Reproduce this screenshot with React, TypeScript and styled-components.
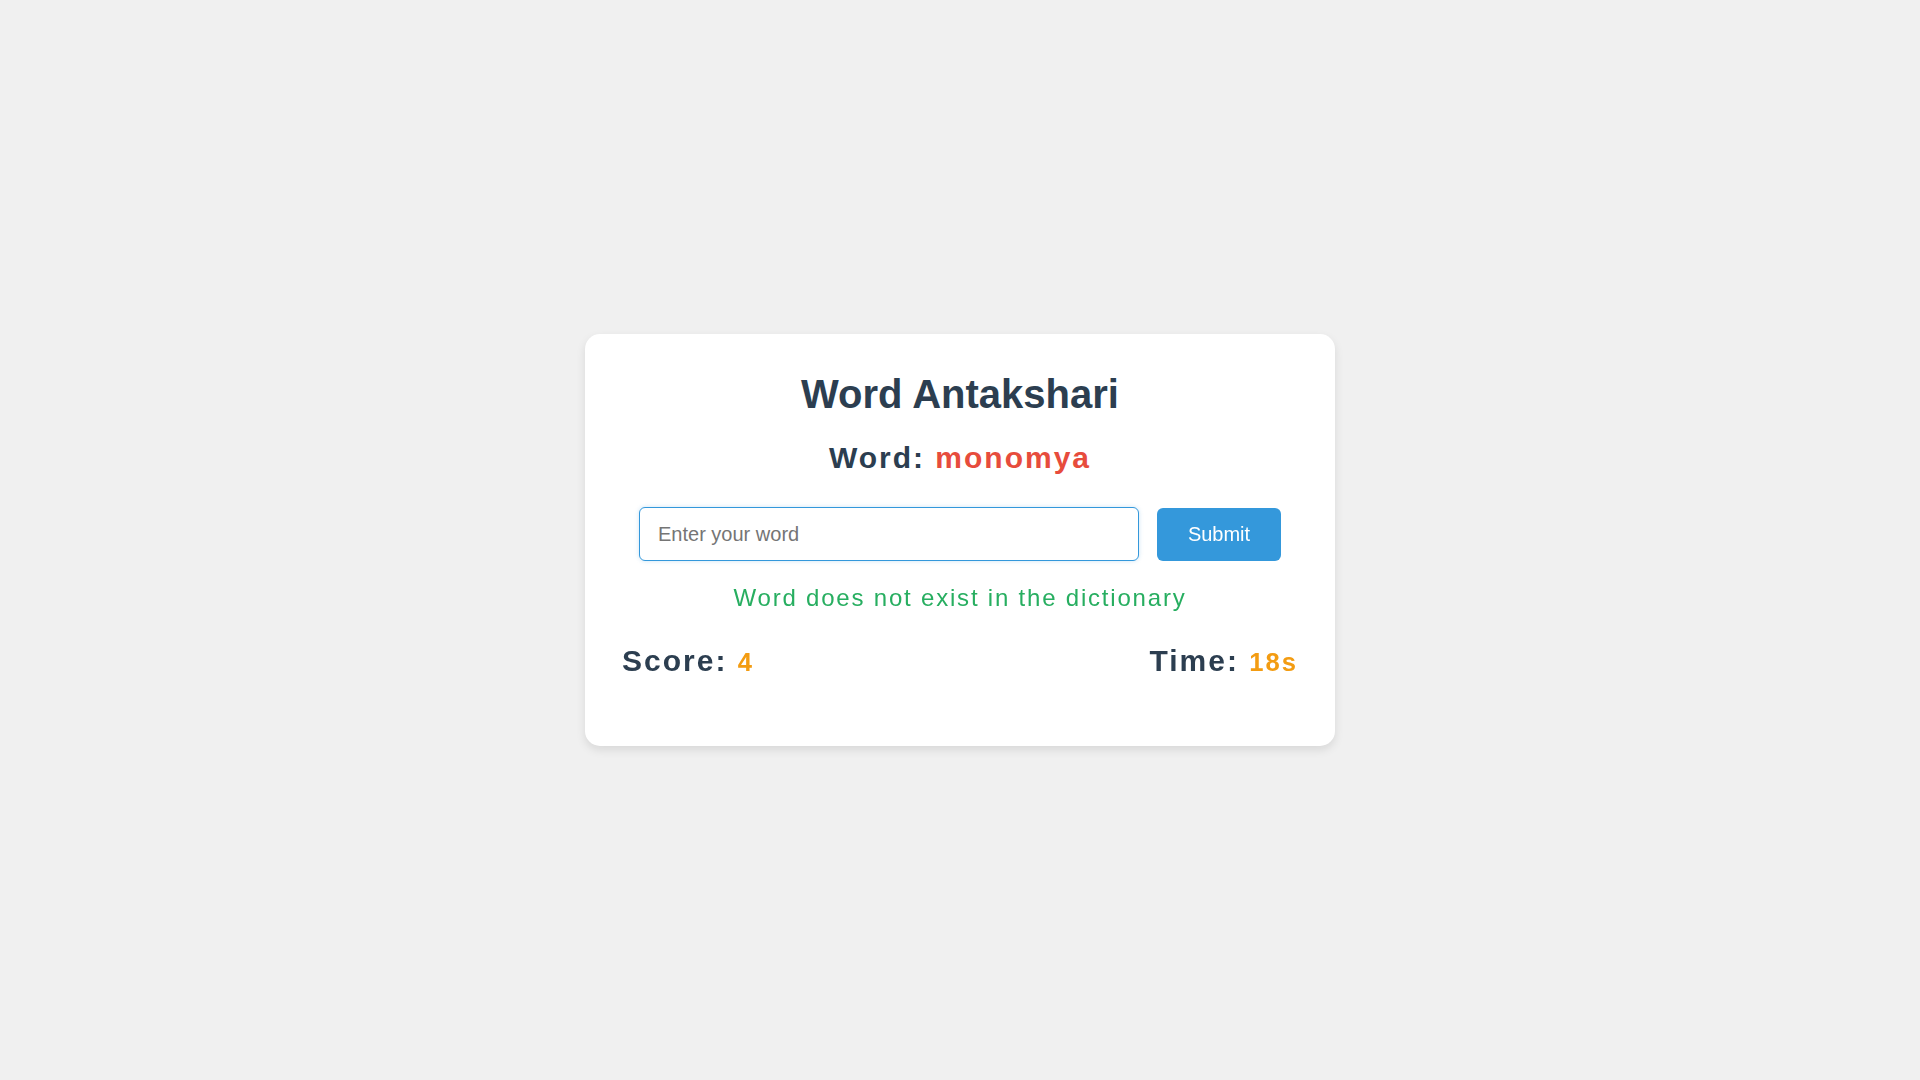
import React, { useState } from "react";
import styled, { createGlobalStyle } from "styled-components";

const GlobalStyle = createGlobalStyle`
  html, body {
    margin: 0;
    padding: 0;
    background: #f0f0f0;
    font-family: "Liberation Sans", Arial, sans-serif;
  }
  * { box-sizing: border-box; }
`;

const Page = styled.div`
  min-height: 100vh;
  display: flex;
  align-items: center;
  justify-content: center;
`;

const Card = styled.div`
  width: 750px;
  background: #ffffff;
  border-radius: 15px;
  box-shadow: 0 4px 10px rgba(0, 0, 0, 0.1);
  padding: 36px 32px 67px;
  display: flex;
  flex-direction: column;
  align-items: center;
`;

const Title = styled.h1`
  margin: 0;
  font-size: 40px;
  line-height: 48px;
  font-weight: 700;
  color: #2c3e50;
`;

const WordLine = styled.div`
  margin-top: 22px;
  font-size: 30px;
  line-height: 36px;
  font-weight: 700;
  letter-spacing: 2px;
  color: #2c3e50;
`;

const Highlight = styled.span<{ $color: string; $size?: number }>`
  color: ${(p) => p.$color};
  line-height: 1;
  ${(p) => (p.$size ? `font-size: ${p.$size}px;` : "")}
`;

const InputRow = styled.form`
  margin-top: 31px;
  display: flex;
  align-items: center;
  gap: 18px;
  height: 54px;
`;

const WordInput = styled.input`
  width: 500px;
  height: 54px;
  padding: 0 18px;
  font-family: "Liberation Sans", Arial, sans-serif;
  font-size: 20px;
  color: #2c3e50;
  border: 1px solid #3498db;
  border-radius: 6px;
  outline: none;
  box-shadow: 0 0 4px rgba(52, 152, 219, 0.25);
  &::placeholder {
    color: #757575;
  }
`;

const SubmitButton = styled.button`
  width: 124px;
  height: 53px;
  border: none;
  border-radius: 6px;
  background: #3498db;
  color: #ffffff;
  font-family: "Liberation Sans", Arial, sans-serif;
  font-size: 20px;
  cursor: pointer;
`;

const Message = styled.div`
  margin-top: 23px;
  font-size: 24px;
  line-height: 28px;
  letter-spacing: 1.8px;
  color: #27ae60;
`;

const StatsRow = styled.div`
  margin-top: 31px;
  width: 100%;
  padding: 0 5px;
  display: flex;
  justify-content: space-between;
  align-items: baseline;
`;

const Stat = styled.div`
  font-size: 30px;
  line-height: 36px;
  font-weight: 700;
  letter-spacing: 2px;
  color: #2c3e50;
`;

export default function App() {
  const [value, setValue] = useState("");
  return (
    <>
      <GlobalStyle />
      <Page>
        <Card>
          <Title>Word Antakshari</Title>
          <WordLine>
            Word: <Highlight $color="#e74c3c">monomya</Highlight>
          </WordLine>
          <InputRow onSubmit={(e) => e.preventDefault()}>
            <WordInput
              autoFocus
              placeholder="Enter your word"
              value={value}
              onChange={(e) => setValue(e.target.value)}
            />
            <SubmitButton type="submit">Submit</SubmitButton>
          </InputRow>
          <Message>Word does not exist in the dictionary</Message>
          <StatsRow>
            <Stat>
              Score: <Highlight $color="#f39c12" $size={25.6}>4</Highlight>
            </Stat>
            <Stat>
              Time: <Highlight $color="#f39c12" $size={25.6}>18s</Highlight>
            </Stat>
          </StatsRow>
        </Card>
      </Page>
    </>
  );
}
